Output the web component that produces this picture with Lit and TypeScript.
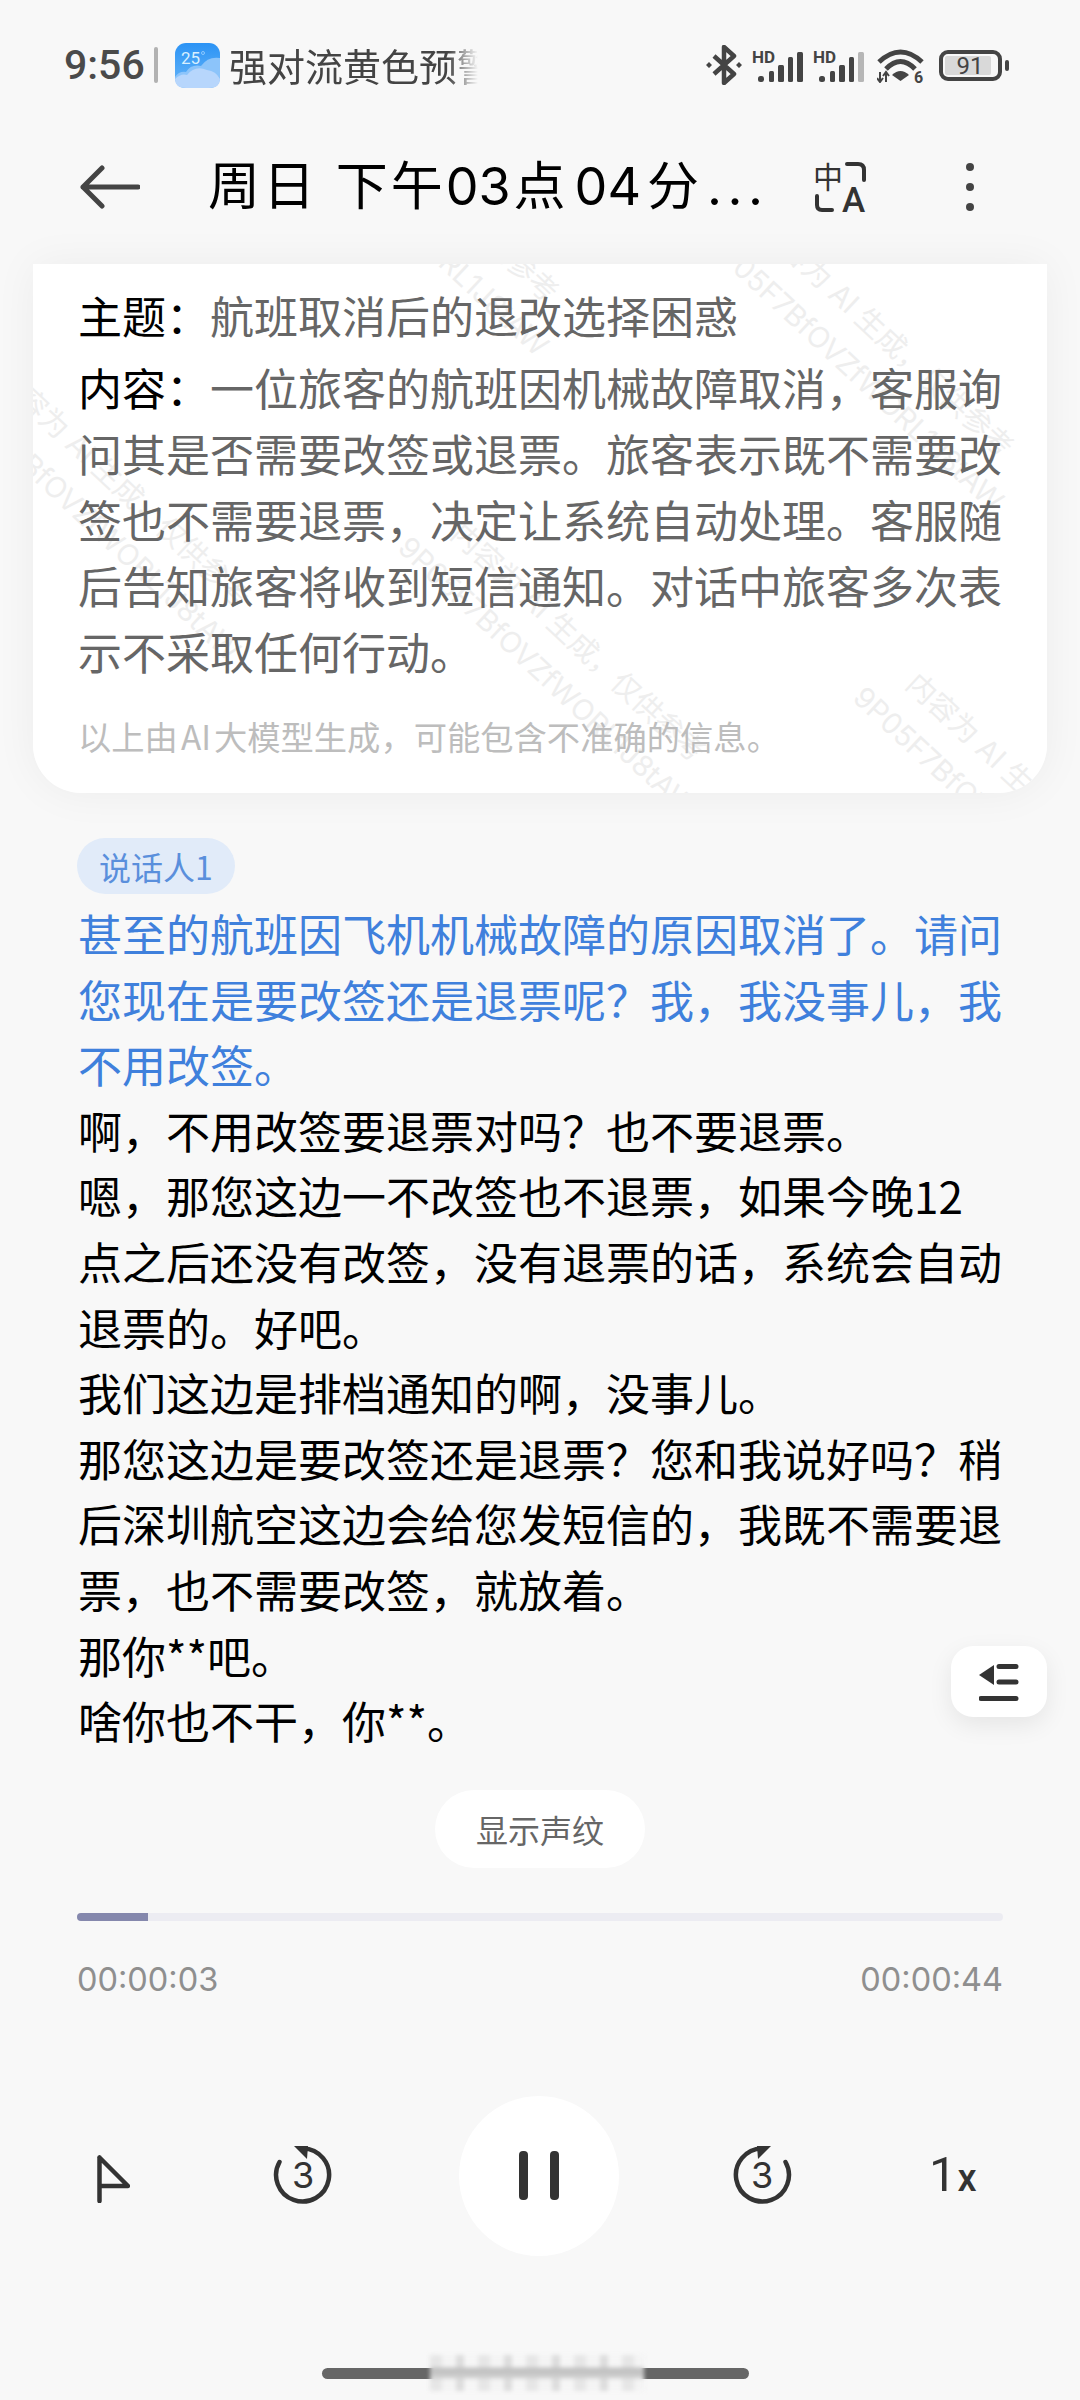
import { LitElement, html, css, svg } from 'lit';
import { customElement } from 'lit/decorators.js';

// watermark stamps, in card coordinates
const STAMPS = [
  { x: 253, y: -248 },
  { x: 708, y: -93 },
  { x: -55, y: 57 },
  { x: 400, y: 212 },
  { x: 855, y: 362 },
];

const signal = (lastDim: boolean) => html`<svg class="signal" width="51" height="33" viewBox="0 0 51 33">
  <text x="0" y="14" class="hd">HD</text>
  <rect x="6" y="27" width="6" height="6" rx="2.5" fill="#444"></rect>
  <rect x="17" y="22" width="5" height="11" rx="1.5" fill="#444"></rect>
  <rect x="26" y="16" width="6" height="17" rx="1.5" fill="#444"></rect>
  <rect x="36" y="8" width="5" height="25" rx="1.5" fill="#444"></rect>
  <rect x="45" y="3" width="6" height="30" rx="1.5" fill=${lastDim ? '#b6b6b6' : '#444'}></rect>
</svg>`;

const skip = (mirror: boolean) => html`<svg class="skip" width="60" height="60" viewBox="0 0 60 60">
  <g transform=${mirror ? 'translate(60 0) scale(-1 1)' : ''}>
    ${svg`<path d="M6.5 17 A26.5 26.5 0 1 0 30 3.5" fill="none" stroke="#333" stroke-width="4.5" stroke-linecap="round"></path>
    <path d="M21 1 L35 1 L34 14 Z" fill="#333"></path>`}
  </g>
  <text x="30" y="43" text-anchor="middle" class="three">3</text>
</svg>`;

@customElement('app-root')
export class AppRoot extends LitElement {
  static styles = css`
    :host {
      display: block;
      width: 1080px;
      height: 2400px;
      position: relative;
      overflow: hidden;
      background: #f8f8f8;
      font-family: 'Noto Sans CJK SC', sans-serif;
      color: #000;
    }

    .status {
      height: 130px;
      display: flex;
      align-items: center;
      padding-left: 64px;
    }
    .clock {
      font-family: Roboto, sans-serif;
      font-size: 41px;
      font-weight: 500;
      color: #4a4a4a;
      width: 78px;
    }
    .divider {
      width: 4px;
      height: 36px;
      margin-left: 12px;
      background: #b2b2b2;
      border-radius: 2px;
    }
    .weather {
      margin-left: 17px;
      flex: none;
    }
    .alert {
      margin-left: 9px;
      width: 249px;
      font-size: 38px;
      line-height: 50px;
      color: #444;
      white-space: nowrap;
      overflow: hidden;
      -webkit-mask-image: linear-gradient(90deg, #000 88%, transparent);
      mask-image: linear-gradient(90deg, #000 88%, transparent);
    }
    .status-icons {
      margin-left: auto;
      padding-right: 71px;
      display: flex;
      align-items: center;
      gap: 10px;
    }
    .hd {
      font-family: Roboto, sans-serif;
      font-size: 17px;
      font-weight: 700;
      fill: #444;
    }
    .wifi {
      margin-left: 3px;
    }
    .battery {
      margin-left: 5px;
    }
    .battery-num {
      font-family: Roboto, sans-serif;
      font-size: 24px;
      fill: #444;
    }
    .six {
      font-family: Roboto, sans-serif;
      font-size: 16px;
      font-weight: 700;
      fill: #444;
    }

    .toolbar {
      height: 114px;
      padding-bottom: 20px;
      padding-left: 80px;
      display: flex;
      align-items: center;
    }
    .title {
      margin-left: 68px;
      width: 534px;
      flex: none;
      font-family: Inter, 'Noto Sans CJK SC', sans-serif;
      font-size: 52px;
      line-height: 70px;
      letter-spacing: 3px;
      white-space: nowrap;
    }
    .digits {
      letter-spacing: 0;
      margin: 0 3px 0 0;
    }
    .digits.late {
      margin: 0 6px;
    }
    .ellipsis {
      margin-left: 5px;
      letter-spacing: 5.5px;
    }
    .translate {
      margin-left: 72px;
    }
    .more {
      margin-left: 100px;
    }
    .tr-cn {
      font-size: 30px;
      fill: #333;
    }
    .tr-a {
      font-family: Roboto, sans-serif;
      font-size: 35px;
      font-weight: 500;
      fill: #333;
    }

    .card-shadow {
      margin: 0 33px;
      border-radius: 0 0 48px 48px;
      box-shadow: 0 0 44px rgba(0, 0, 0, 0.05);
    }
    .card {
      position: relative;
      overflow: hidden;
      padding: 18px 44px 33px 45px;
      height: 529px;
      box-sizing: border-box;
      background: #fff;
      border-radius: 0 0 48px 48px;
    }
    .stamp {
      position: absolute;
      width: 440px;
      transform: rotate(43deg);
      transform-origin: 0 0;
      text-align: center;
      font-family: Inter, 'Noto Sans CJK SC', sans-serif;
      font-size: 29px;
      line-height: 46px;
      color: #eeeeee;
      white-space: nowrap;
    }
    .summary {
      position: relative;
      font-size: 44px;
      line-height: 66px;
      color: #666;
    }
    .summary + .summary {
      margin-top: 6px;
    }
    .summary b {
      font-weight: 400;
      color: #000;
    }
    .disclaimer {
      position: relative;
      margin-top: 30px;
      font-size: 33.3px;
      line-height: 44px;
      color: #bdbdbd;
    }
    .disclaimer span {
      padding: 0 3px;
    }

    .transcript {
      padding: 45px 78px 0 78px;
    }
    .speaker {
      width: 158px;
      height: 56px;
      margin-left: -1px;
      border-radius: 28px;
      background: #e1ebf9;
      color: #5a8fdc;
      font-size: 32px;
      display: flex;
      align-items: center;
      justify-content: center;
    }
    .lines {
      margin-top: 7px;
      font-size: 44px;
      line-height: 65.6px;
    }
    .active {
      color: #3f80dc;
    }

    .voiceprint {
      width: 210px;
      height: 78px;
      margin: 36px auto 0;
      border-radius: 39px;
      background: #fff;
      color: #666;
      font-size: 32px;
      display: flex;
      align-items: center;
      justify-content: center;
    }
    .track {
      height: 8px;
      margin: 45px 77px 0;
      background: #ececf2;
      border-radius: 4px;
      overflow: hidden;
    }
    .progress {
      height: 100%;
      background: #8588ad;
    }
    .times {
      margin: 37px 77px 0;
      display: flex;
      justify-content: space-between;
      font-family: Inter, sans-serif;
      font-size: 32.5px;
      line-height: 44px;
      color: #8f8f8f;
    }

    .controls {
      margin-top: 94px;
      height: 160px;
      padding-left: 97px;
      display: flex;
      align-items: center;
    }
    .flag {
      margin-top: 6px;
    }
    .rewind {
      margin-left: 143px;
      margin-top: 4px;
    }
    .play {
      margin-left: 126px;
      width: 160px;
      height: 160px;
      border-radius: 50%;
      background: #fff;
      display: flex;
      align-items: center;
      justify-content: center;
    }
    .forward {
      margin-left: 113px;
      margin-top: 4px;
    }
    .speed {
      margin-left: 137px;
      margin-top: 2px;
      font-family: Roboto, sans-serif;
      font-size: 49px;
      line-height: 60px;
      color: #333;
    }
    .speed span {
      font-size: 38px;
      font-weight: 500;
      margin-left: 1px;
    }
    .three {
      font-family: Inter, sans-serif;
      font-size: 36px;
      font-weight: 400;
      fill: #333;
    }

    .home {
      position: relative;
      width: 427px;
      height: 11px;
      margin: 112px 0 0 322px;
      background: #666;
      border-radius: 6px;
    }
    .home-blur {
      position: absolute;
      left: 108px;
      top: -13px;
      width: 214px;
      height: 36px;
      background:
        linear-gradient(#0000 34%, #bcbcbc 36%, #d0d0d0 64%, #0000 66%),
        repeating-linear-gradient(90deg, #e6e6e6 0 12px, #f4f4f4 12px 26px, #dcdcdc 26px 34px, #f6f6f6 34px 48px);
      filter: blur(2px);
    }

    .fab {
      position: absolute;
      left: 951px;
      top: 1646px;
      width: 96px;
      height: 71px;
      background: #fff;
      border-radius: 22px;
      box-shadow: 0 8px 24px rgba(0, 0, 0, 0.08);
      display: flex;
      align-items: center;
      justify-content: center;
    }
  `;

  render() {
    return html`
      <div class="status">
        <span class="clock">9:56</span>
        <span class="divider"></span>
        <svg class="weather" width="45" height="45" viewBox="0 0 45 45">
          <defs>
            <linearGradient id="sky" x1="0" y1="0" x2="0" y2="1">
              <stop offset="0" stop-color="#2b93f5"></stop>
              <stop offset="1" stop-color="#69b6f8"></stop>
            </linearGradient>
          </defs>
          <rect width="45" height="45" rx="11" fill="url(#sky)"></rect>
          <path d="M0 34 Q4 28 11 29 Q16 21 26 23 Q33 13 45 15 V34 Q45 45 34 45 H11 Q0 45 0 34 Z" fill="#8cc4fa"></path>
          <path d="M0 36 Q6 30 12 32 Q20 22 32 27 Q41 28 45 36 Q45 45 34 45 H11 Q0 45 0 36 Z" fill="#b7d6fc"></path>
          <text x="6" y="21" font-family="Roboto, sans-serif" font-size="17" fill="#d8efff">25</text>
          <circle cx="28" cy="10" r="1.5" fill="none" stroke="#9fd2ff" stroke-width="0.8"></circle>
        </svg>
        <div class="alert">强对流黄色预警</div>
        <div class="status-icons">
          <svg width="36" height="40" viewBox="0 0 36 40">
            <path d="M8 11 L28 29 L18 38 V2 L28 11 L8 29" fill="none" stroke="#444" stroke-width="4.5" stroke-linejoin="round"></path>
            <path d="M3 17 L6 20 L3 23 L0 20 Z M33 17 L36 20 L33 23 L30 20 Z" fill="#444"></path>
          </svg>
          ${signal(false)} ${signal(true)}
          <svg class="wifi" width="47" height="36" viewBox="0 0 47 36">
            <path d="M2 15 Q23.5 -5 45 15" fill="none" stroke="#444" stroke-width="5"></path>
            <path d="M9 22 Q23.5 7 38 22" fill="none" stroke="#444" stroke-width="5"></path>
            <path d="M15 28 Q23.5 20 32 28 L23.5 34 Z" fill="#444"></path>
            <path d="M3 25 V35 M0 31 L3 35 L6 31 M9 35 V25 M6 29 L9 25 L12 29" fill="none" stroke="#444" stroke-width="2"></path>
            <text x="37" y="36" class="six">6</text>
          </svg>
          <svg class="battery" width="70" height="31" viewBox="0 0 70 31">
            <rect x="2" y="2" width="59" height="27" rx="7" fill="none" stroke="#444" stroke-width="4"></rect>
            <rect x="6" y="6" width="46" height="19" rx="2" fill="#d9d9d9"></rect>
            <text x="31" y="24" text-anchor="middle" class="battery-num">91</text>
            <rect x="66" y="10" width="4" height="11" rx="2" fill="#444"></rect>
          </svg>
        </div>
      </div>

      <div class="toolbar">
        <svg width="60" height="44" viewBox="0 0 60 44">
          <path d="M58 22 H3 M22 3 L3 22 L22 41" fill="none" stroke="#444" stroke-width="5" stroke-linecap="round" stroke-linejoin="round"></path>
        </svg>
        <div class="title">周日 下午<span class="digits">03</span>点<span class="digits late">04</span>分<span class="ellipsis">...</span></div>
        <svg class="translate" width="52" height="52" viewBox="0 0 52 52">
          <text x="-1" y="27" class="tr-cn">中</text>
          <path d="M33 3 H44 Q50 3 50 9 V19" fill="none" stroke="#333" stroke-width="4" stroke-linecap="round"></path>
          <path d="M3 35 V44 Q3 49 8 49 H18" fill="none" stroke="#333" stroke-width="4" stroke-linecap="round"></path>
          <text x="28" y="51" class="tr-a">A</text>
        </svg>
        <svg class="more" width="8" height="48" viewBox="0 0 8 48">
          <circle cx="4" cy="4" r="4" fill="#444"></circle>
          <circle cx="4" cy="24" r="4" fill="#444"></circle>
          <circle cx="4" cy="44" r="4" fill="#444"></circle>
        </svg>
      </div>

      <div class="card-shadow">
        <div class="card">
          ${STAMPS.map(
            s => html`<div class="stamp" style="left:${s.x}px;top:${s.y}px">
              <div>内容为 AI 生成，仅供参考</div>
              <div>9P05F7BfOVZfWORL1J8tAW</div>
            </div>`,
          )}
          <div class="summary"><b>主题：</b>航班取消后的退改选择困惑</div>
          <div class="summary">
            <b>内容：</b>一位旅客的航班因机械故障取消，客服询问其是否需要改签或退票。旅客表示既不需要改签也不需要退票，决定让系统自动处理。客服随后告知旅客将收到短信通知。对话中旅客多次表示不采取任何行动。
          </div>
          <div class="disclaimer">以上由<span>AI</span>大模型生成，可能包含不准确的信息。</div>
        </div>
      </div>

      <div class="transcript">
        <div class="speaker">说话人1</div>
        <div class="lines">
          <div class="active">甚至的航班因飞机机械故障的原因取消了。请问您现在是要改签还是退票呢？我，我没事儿，我不用改签。</div>
          <div>啊，不用改签要退票对吗？也不要退票。</div>
          <div>嗯，那您这边一不改签也不退票，如果今晚12点之后还没有改签，没有退票的话，系统会自动退票的。好吧。</div>
          <div>我们这边是排档通知的啊，没事儿。</div>
          <div>那您这边是要改签还是退票？您和我说好吗？稍后深圳航空这边会给您发短信的，我既不需要退票，也不需要改签，就放着。</div>
          <div>那你**吧。</div>
          <div>啥你也不干，你**。</div>
        </div>
      </div>

      <div class="voiceprint">显示声纹</div>
      <div class="track"><div class="progress" style="width:${(71 / 926) * 100}%"></div></div>
      <div class="times"><span>00:00:03</span><span>00:00:44</span></div>

      <div class="controls">
        <svg class="flag" width="33" height="48" viewBox="0 0 33 48">
          <path d="M2.5 2.5 V46 M2.5 2.5 L31 31 H2.5" fill="none" stroke="#333" stroke-width="4.5" stroke-linecap="round" stroke-linejoin="round"></path>
        </svg>
        <span class="rewind">${skip(false)}</span>
        <div class="play">
          <svg width="40" height="49" viewBox="0 0 40 49">
            <rect x="0" y="0" width="9" height="49" rx="4" fill="#333"></rect>
            <rect x="31" y="0" width="9" height="49" rx="4" fill="#333"></rect>
          </svg>
        </div>
        <span class="forward">${skip(true)}</span>
        <div class="speed">1<span>x</span></div>
      </div>

      <div class="home"><div class="home-blur"></div></div>

      <div class="fab">
        <svg width="40" height="38" viewBox="0 0 40 38">
          <path d="M0 12 L15 2 V22 Z" fill="#333"></path>
          <path d="M20 3.5 H37 M20 19 H37 M2 35.5 H37" fill="none" stroke="#333" stroke-width="5" stroke-linecap="round"></path>
        </svg>
      </div>
    `;
  }
}
